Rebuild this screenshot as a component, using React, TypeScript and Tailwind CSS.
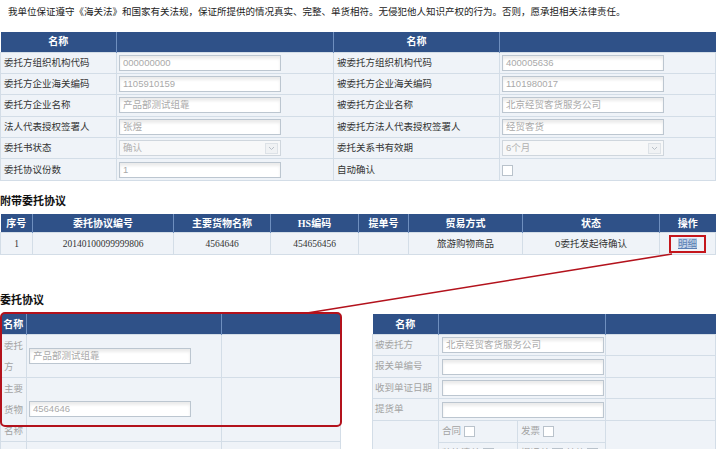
import React from "react";

const cjk = "font-['Liberation_Sans','Noto_Sans_CJK_SC',sans-serif]";

function Field({ value = "", w = "w-[162px]" }: { value?: string; w?: string }) {
  return (
    <div
      className={`${w} h-[16px] border border-[#bcc6d0] bg-white shadow-[inset_0_3px_3px_rgba(0,0,0,0.08)] px-[3px] text-[9.5px] leading-[14px] text-[#a9a9a9] whitespace-nowrap overflow-hidden`}
    >
      {value}
    </div>
  );
}

function Select({ value }: { value: string }) {
  return (
    <div className="w-[162px] h-[16px] border border-[#cfd6dd] bg-[#f7f8f9] flex items-center justify-between pl-[3px] pr-[2px] text-[9.5px] text-[#b0b0b0]">
      <span>{value}</span>
      <span className="w-[13px] h-[11px] border border-[#dde2e7] bg-[#f0f2f4] flex items-center justify-center">
        <svg width="7" height="5" viewBox="0 0 7 5">
          <path d="M1 1l2.5 2.5L6 1" stroke="#b9c0c8" fill="none" strokeWidth="1" />
        </svg>
      </span>
    </div>
  );
}

function Check() {
  return <span className="inline-block w-[11px] h-[11px] border border-[#b9c2cb] bg-white align-middle" />;
}

const rows: [string, React.ReactNode, string, React.ReactNode][] = [
  ["委托方组织机构代码", <Field value="000000000" />, "被委托方组织机构代码", <Field value="400005636" />],
  ["委托方企业海关编码", <Field value="1105910159" />, "被委托方企业海关编码", <Field value="1101980017" />],
  ["委托方企业名称", <Field value="产品部测试组靠" />, "被委托方企业名称", <Field value="北京经贸客货服务公司" />],
  ["法人代表授权签署人", <Field value="张煜" />, "被委托方法人代表授权签署人", <Field value="经贸客货" />],
  ["委托书状态", <Select value="确认" />, "委托关系书有效期", <Select value="6个月" />],
  ["委托协议份数", <Field value="1" />, "自动确认", <Check />],
];

const th = "border-r border-[#6f8fbf] font-bold text-white text-center";
const td = "border border-[#d3dde7] bg-[#eff3f8]";

export default function App() {
  return (
    <div className={`relative w-[716px] h-[449px] overflow-hidden bg-white text-[#222] ${cjk}`}>
      <div className="h-[32px] pl-[8px] pt-[5px] text-[9.5px] leading-[14px] text-[#222]">
        我单位保证遵守《海关法》和国家有关法规，保证所提供的情况真实、完整、单货相符。无侵犯他人知识产权的行为。否则，愿承担相关法律责任。
      </div>

      <table className="w-[716px] table-fixed border-collapse text-[9.5px]">
        <colgroup>
          <col className="w-[116px]" />
          <col className="w-[217px]" />
          <col className="w-[166px]" />
          <col />
        </colgroup>
        <thead>
          <tr className="h-[20px] bg-[#2f5188] text-[10px]">
            <th className={th}>名称</th>
            <th className={th}></th>
            <th className={th}>名称</th>
            <th className="font-bold"></th>
          </tr>
        </thead>
        <tbody>
          {rows.map(([a, b, c, d], i) => (
            <tr key={i} className="h-[21.4px]">
              <td className={`${td} pl-[3px] text-[#333] whitespace-nowrap`}>{a}</td>
              <td className={`${td} pl-[2px]`}>{b}</td>
              <td className={`${td} pl-[3px] text-[#333] whitespace-nowrap`}>{c}</td>
              <td className={`${td} pl-[2px]`}>{d}</td>
            </tr>
          ))}
        </tbody>
      </table>

      <div className="h-[33px] pt-[13px] text-[11px] leading-[14px] font-bold text-[#111]">附带委托协议</div>

      <table className="w-[716px] table-fixed border-collapse text-[9.5px] font-['Liberation_Serif','Noto_Sans_CJK_SC',serif]">
        <colgroup>
          <col className="w-[32px]" />
          <col className="w-[141px]" />
          <col className="w-[97px]" />
          <col className="w-[88px]" />
          <col className="w-[50px]" />
          <col className="w-[114px]" />
          <col className="w-[137px]" />
          <col />
        </colgroup>
        <thead>
          <tr className="h-[19px] bg-[#2f5188] text-[10px]">
            {["序号", "委托协议编号", "主要货物名称", "HS编码", "提单号", "贸易方式", "状态"].map((h) => (
              <th key={h} className={th}>
                {h}
              </th>
            ))}
            <th className="font-bold text-white text-center">操作</th>
          </tr>
        </thead>
        <tbody>
          <tr className="h-[22px] text-center text-[#333]">
            <td className={td}>1</td>
            <td className={td}>20140100099999806</td>
            <td className={td}>4564646</td>
            <td className={td}>454656456</td>
            <td className={td}></td>
            <td className={`${td} ${cjk}`}>旅游购物商品</td>
            <td className={`${td} ${cjk}`}>0委托发起待确认</td>
            <td className={`${td} ${cjk}`}>
              <span className="inline-block border-2 border-[#c4161c] px-[7px] leading-[14px]">
                <span className="bg-[#c5d5ea] text-[#5b7fb4] underline decoration-[#5b7fb4]">明细</span>
              </span>
            </td>
          </tr>
        </tbody>
      </table>

      <div className="h-[59px] pt-[38px] text-[11px] leading-[14px] font-bold text-[#111]">委托协议</div>

      <div className="flex items-start text-[9.5px]">
        <table className="w-[341px] table-fixed border-collapse">
          <colgroup>
            <col className="w-[26px]" />
            <col className="w-[195px]" />
            <col />
          </colgroup>
          <thead>
            <tr className="h-[20px] bg-[#2f5188] text-[10px]">
              <th className={th}>名称</th>
              <th className={th}></th>
              <th></th>
            </tr>
          </thead>
          <tbody className="text-[#a3a3a3]">
            <tr className="h-[41px]">
              <td className={`${td} pl-[3px] leading-[21px] break-all`}>委托方</td>
              <td className={`${td} pl-[2px]`}>
                <Field value="产品部测试组靠" />
              </td>
              <td className={td}></td>
            </tr>
            <tr className="h-[64px]">
              <td className={`${td} pl-[3px] leading-[21px] break-all`}>主要货物名称</td>
              <td className={`${td} pl-[2px]`}>
                <Field value="4564646" />
              </td>
              <td className={td}></td>
            </tr>
            <tr className="h-[42px]">
              <td className={`${td} pl-[3px] leading-[21px] align-top break-all`}>HS编码</td>
              <td className={`${td} pl-[2px]`}></td>
              <td className={td}></td>
            </tr>
          </tbody>
        </table>

        <table className="ml-[31px] w-[344px] table-fixed border-collapse">
          <colgroup>
            <col className="w-[66px]" />
            <col className="w-[79px]" />
            <col className="w-[88px]" />
            <col />
          </colgroup>
          <thead>
            <tr className="h-[20px] bg-[#2f5188] text-[10px]">
              <th className={th}>名称</th>
              <th className={th} colSpan={2}></th>
              <th></th>
            </tr>
          </thead>
          <tbody className="text-[#a3a3a3]">
            {[
              ["被委托方", "北京经贸客货服务公司"],
              ["报关单编号", ""],
              ["收到单证日期", ""],
              ["提货单", ""],
            ].map(([l, v]) => (
              <tr key={l} className="h-[21.5px]">
                <td className={`${td} pl-[2px] whitespace-nowrap`}>{l}</td>
                <td className={`${td} pl-[3px]`} colSpan={2}>
                  <Field value={v} />
                </td>
                <td className={td}></td>
              </tr>
            ))}
            <tr className="h-[22px]">
              <td className={td} rowSpan={2}></td>
              <td className={`${td} pl-[3px]`}>
                合同 <Check />
              </td>
              <td className={`${td} pl-[3px]`}>
                发票 <Check />
              </td>
              <td className={td} rowSpan={2}></td>
            </tr>
            <tr className="h-[22px]">
              <td className={`${td} pl-[3px] whitespace-nowrap`}>
                装箱清单 <Check />
              </td>
              <td className={`${td} pl-[3px] whitespace-nowrap`}>
                提运单 <Check /> 其他 <Check />
              </td>
            </tr>
          </tbody>
        </table>
      </div>

      <div className="absolute left-0 top-[312px] w-[342px] h-[115px] rounded-[5px] border-2 border-[#b3121c] pointer-events-none" />
      <svg className="absolute left-0 top-0 pointer-events-none" width="716" height="449">
        <line x1="307" y1="313" x2="672" y2="254" stroke="#b3121c" strokeWidth="1.6" />
      </svg>
    </div>
  );
}
